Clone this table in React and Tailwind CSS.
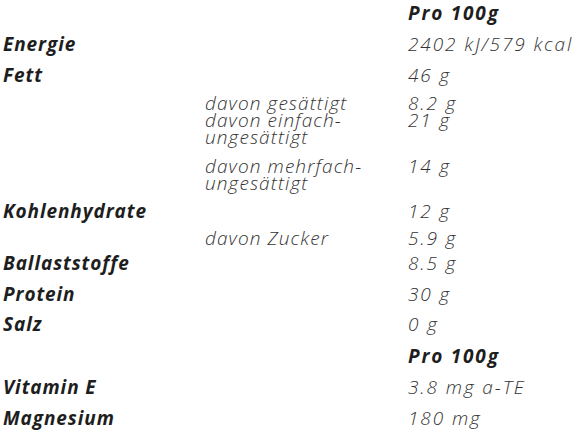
import React from 'react'

const rows = [
  { h: 31, value: 'Pro 100g', head: true },
  { h: 31, label: 'Energie', value: '2402 kJ/579 kcal' },
  { h: 28, label: 'Fett', value: '46 g' },
  { h: 17, sub: 'davon gesättigt', value: '8.2 g' },
  { h: 46, sub: ['davon einfach-', 'ungesättigt'], value: '21 g' },
  { h: 45, sub: ['davon mehrfach-', 'ungesättigt'], value: '14 g' },
  { h: 27, label: 'Kohlenhydrate', value: '12 g' },
  { h: 25, sub: 'davon Zucker', value: '5.9 g' },
  { h: 31, label: 'Ballaststoffe', value: '8.5 g' },
  { h: 30, label: 'Protein', value: '30 g' },
  { h: 32, label: 'Salz', value: '0 g' },
  { h: 31, value: 'Pro 100g', head: true },
  { h: 31, label: 'Vitamin E', value: '3.8 mg a-TE' },
  { h: 25, label: 'Magnesium', value: '180 mg' },
]

const heights = {
  17: 'h-[17px]', 25: 'h-[25px]', 27: 'h-[27px]', 28: 'h-[28px]', 30: 'h-[30px]',
  31: 'h-[31px]', 32: 'h-[32px]', 45: 'h-[45px]', 46: 'h-[46px]',
}

export default function App() {
  return (
    <div className="w-[579px] h-[434px] bg-white pt-[5px] pl-[3px] italic text-[19px] leading-[17px] overflow-hidden whitespace-nowrap" style={{ fontFamily: '"Open Sans", Lato, sans-serif' }}>
      {rows.map((r, i) => (
        <div key={i} className={`grid grid-cols-[202px_203px_1fr] ${heights[r.h]}`}>
          <div className="font-bold tracking-[0.9px] text-[#1e1e1e]">{r.label}</div>
          <div className="font-light tracking-[1.1px] text-[#333]">
            {Array.isArray(r.sub) ? r.sub.map(s => <div key={s}>{s}</div>) : r.sub}
          </div>
          <div className={r.head ? 'font-bold tracking-[1.8px] text-[#1e1e1e]' : 'font-light tracking-[1.9px] text-[#333]'}>{r.value}</div>
        </div>
      ))}
    </div>
  )
}
